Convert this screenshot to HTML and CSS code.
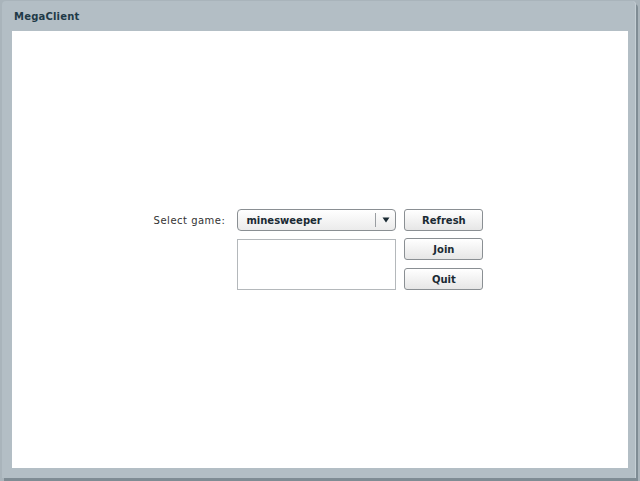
FILE: index.html
```html
<!DOCTYPE html>
<html>
<head>
<meta charset="utf-8">
<title>MegaClient</title>
<link rel="stylesheet" href="styles.css">
</head>
<body>
<div class="window">
  <div class="titlebar">MegaClient</div>
  <div class="panel">
    <div class="form">
      <label class="label">Select game:</label>
      <div class="combo">
        <span class="combo-text">minesweeper</span>
        <span class="combo-arrow"><svg width="8" height="6" viewBox="0 0 8 6"><path d="M0.5 0.5 H7.5 L4 5.5 Z" fill="#1a2a33"/></svg></span>
      </div>
      <button class="btn">Refresh</button>
      <div class="list"></div>
      <div class="btns">
        <button class="btn">Join</button>
        <button class="btn">Quit</button>
      </div>
    </div>
  </div>
</div>
</body>
</html>
```
FILE: styles.css
```css
html, body {
  margin: 0;
  padding: 0;
  width: 640px;
  height: 481px;
  overflow: hidden;
  background: #a9b4bb;
}
.window {
  box-sizing: border-box;
  margin: 1px 4px 0 2px;
  height: 477px;
  background: #b3bec5;
  border-radius: 4px 4px 0 0;
  border-right: 1px solid #c4ced4;
  box-shadow: 2px 3px 0 #7f8c94;
  display: flex;
  flex-direction: column;
  padding: 0 7px 10px 10px;
}
.titlebar {
  height: 30px;
  display: flex;
  align-items: center;
  padding-left: 2px;
  font-family: "DejaVu Sans", Verdana, sans-serif;
  font-weight: bold;
  font-size: 10px;
  color: #1f3a48;
  letter-spacing: 0.2px;
}
.panel {
  flex: 1;
  background: #ffffff;
  display: flex;
  align-items: center;
  justify-content: center;
  padding-right: 3px;
}
.form {
  display: grid;
  grid-template-columns: auto 159px 79px;
  grid-template-rows: 22px 51px;
  column-gap: 8px;
  row-gap: 8px;
  font-family: "DejaVu Sans", Verdana, sans-serif;
  font-size: 10px;
}
.label {
  color: #333;
  display: flex;
  align-items: center;
  justify-content: flex-end;
  padding-right: 4px;
  letter-spacing: 0.5px;
}
.combo {
  box-sizing: border-box;
  border: 1px solid #8a8f93;
  border-radius: 4px;
  background: linear-gradient(#ffffff, #ebebeb);
  display: flex;
  align-items: stretch;
}
.combo-text {
  flex: 1;
  display: flex;
  align-items: center;
  padding-left: 8px;
  font-weight: bold;
  color: #1a2a33;
}
.combo-arrow {
  width: 19px;
  display: flex;
  align-items: center;
  justify-content: center;
  border-left: 1px solid #9a9ea2;
  margin: 3px 0;
}
.list {
  grid-column: 2;
  box-sizing: border-box;
  border: 1px solid #b4b8bb;
  background: #fff;
}
.btns {
  display: flex;
  flex-direction: column;
  gap: 8px;
  margin-top: -1px;
}
.btn {
  box-sizing: border-box;
  height: 22px;
  width: 79px;
  border: 1px solid #8a8f93;
  border-radius: 3px;
  background: linear-gradient(#ffffff, #e6e6e6);
  font-family: "DejaVu Sans", Verdana, sans-serif;
  font-size: 10px;
  font-weight: bold;
  color: #1a2a33;
  padding: 0;
}
```
